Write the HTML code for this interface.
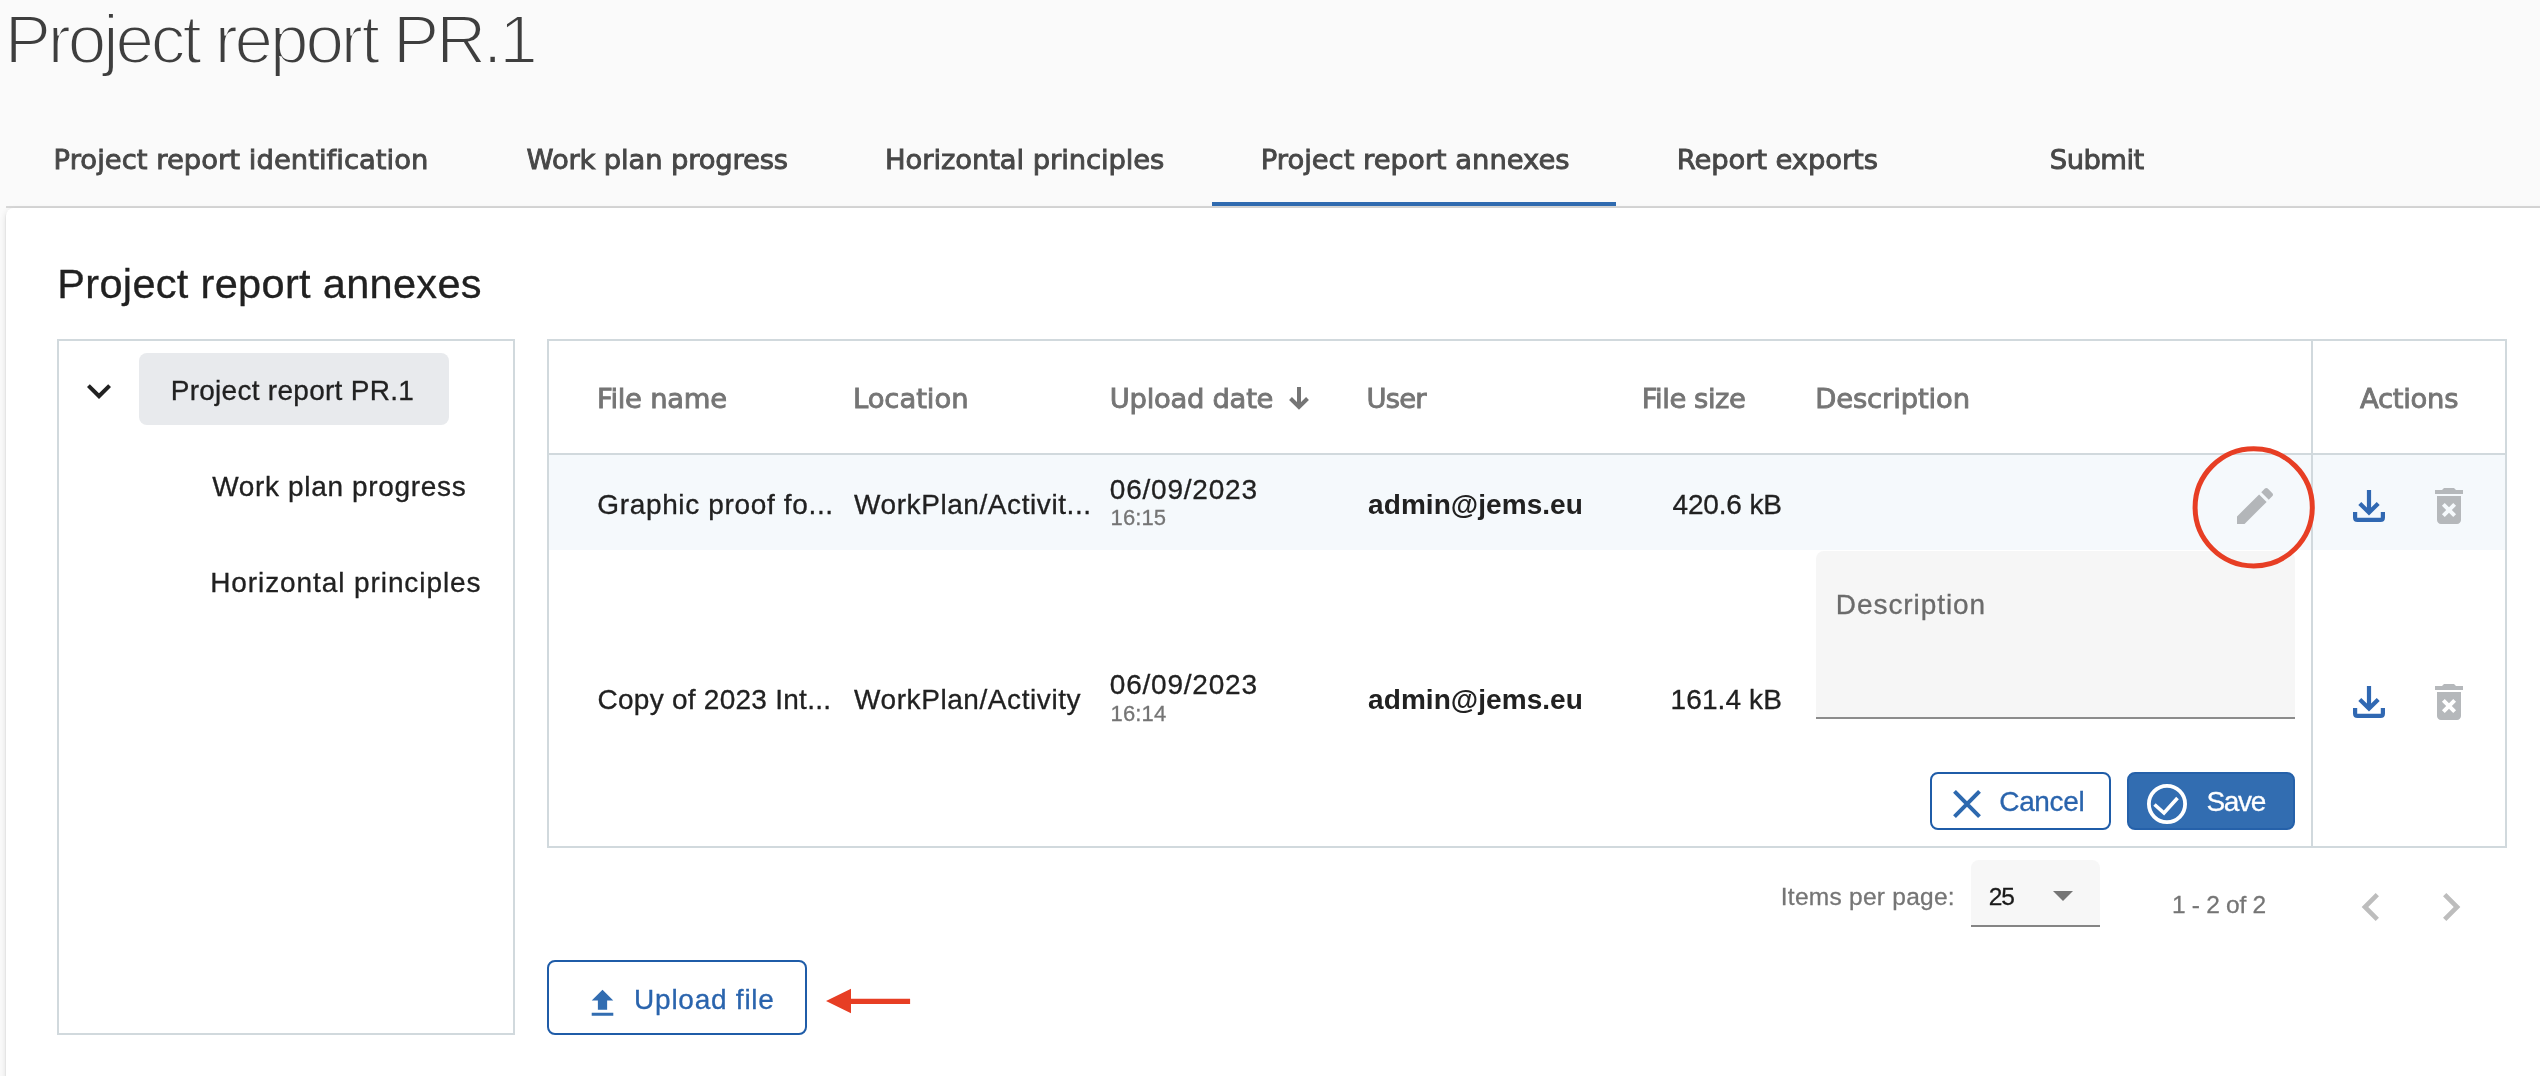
<!DOCTYPE html>
<html lang="en">
<head>
<meta charset="utf-8">
<title>Project report PR.1</title>
<style>
html,body{margin:0;padding:0}
body{width:2540px;height:1076px;overflow:hidden;background:#fafafa;position:relative;
  font-family:"Liberation Sans","DejaVu Sans",sans-serif;font-size:28px;color:#212121}
*{box-sizing:border-box}
.t{position:absolute;white-space:nowrap;line-height:1;margin:0;padding:0;font-weight:400;-webkit-text-stroke-width:0.3px}
.abs{position:absolute}
svg{position:absolute;overflow:visible}
/* title */
h1.t{font-size:69.3px;color:#3e3e3e;-webkit-text-stroke:2.1px #fafafa}
/* tabs */
.tabs{position:absolute;left:6px;top:110px;width:2534px;height:98px;border-bottom:2px solid #d8d8d8}
.tab{position:absolute;top:0;height:96px}
.tab .t{top:35.3px;color:#474747;-webkit-text-stroke:0.9px #474747;font-family:"DejaVu Sans","Liberation Sans",sans-serif;font-size:27.4px}
.ink{position:absolute;left:1206px;top:92px;width:404px;height:4px;background:#306bb0}
/* card */
.card{position:absolute;left:6px;top:208px;width:2560px;height:900px;background:#fff;border-radius:8px;
  box-shadow:0 4px 2px -2px rgba(0,0,0,.2),0 2px 2px 0 rgba(0,0,0,.14),0 2px 6px 0 rgba(0,0,0,.12)}
h3.t{font-size:41.5px;color:#212121}
/* tree */
.tree{position:absolute;left:57px;top:339px;width:458px;height:696px;border:2px solid #d1d9dd;background:#fff}
.sel{position:absolute;left:139px;top:353px;width:310px;height:72px;border-radius:8px;background:#e8eaed}
/* table */
.table{position:absolute;left:547px;top:339px;width:1960px;height:509px;border:2px solid #d1d9dd;background:#fff}
.hline{position:absolute;left:549px;top:453px;width:1956px;height:2px;background:#d1d9dd}
.vline{position:absolute;left:2311px;top:341px;width:2px;height:505px;background:#d1d9dd}
.row1{position:absolute;left:549px;top:455px;width:1956px;height:95px;background:#f5f9fc}
.th{color:#757575;-webkit-text-stroke:0.9px #757575;font-family:"DejaVu Sans","Liberation Sans",sans-serif;font-size:27.4px}
.b{font-weight:700;font-size:28px;color:#212121;-webkit-text-stroke-width:0}
.sm{font-size:22px;color:#757575}
.ta{position:absolute;left:1816px;top:551px;width:479px;height:168px;background:#f6f6f6;border-radius:8px 8px 0 0;border-bottom:2px solid #8c8c8c}
.btn{position:absolute;border:2px solid #1f5ca8;border-radius:8px;background:#fff;color:#2a64ad}
.btn.pri{background:#326db1;border-color:#2561aa;color:#fff}
.selbox{position:absolute;left:1971px;top:860px;width:128.5px;height:66.5px;background:#f7f7f7;border-radius:8px 8px 0 0;border-bottom:2px solid #858585}
.pg{font-size:24.5px;color:#757575}
</style>
</head>
<body>
<div id="page" style="position:absolute;left:0;top:0;width:2540px;height:1076px;will-change:transform">

<h1 class="t" id="title" style="left:4.7px;top:4.6px;letter-spacing:-3.12px">Project report PR.1</h1>

<div class="tabs">
  <div class="tab" style="left:0;width:470px"><span class="t" id="tab1" style="left:47.6px;top:36.2px;letter-spacing:0.03px">Project report identification</span></div>
  <div class="tab" style="left:470px;width:360px"><span class="t" id="tab2" style="left:50.6px;top:36.3px;letter-spacing:-0.16px">Work plan progress</span></div>
  <div class="tab" style="left:830px;width:376px"><span class="t" id="tab3" style="left:49.0px;top:36.3px;letter-spacing:-0.08px">Horizontal principles</span></div>
  <div class="tab" style="left:1206px;width:404px"><span class="t" id="tab4" style="left:48.8px;top:36.2px;letter-spacing:-0.02px">Project report annexes</span></div>
  <div class="tab" style="left:1610px;width:320px"><span class="t" id="tab5" style="left:60.8px;top:36.2px;letter-spacing:-0.10px">Report exports</span></div>
  <div class="tab" style="left:1930px;width:320px"><span class="t" id="tab6" style="left:113.8px;top:36.2px;letter-spacing:-0.54px">Submit</span></div>
  <div class="ink"></div>
</div>

<div class="card"></div>

<h3 class="t" id="h3" style="left:57.3px;top:263.2px;letter-spacing:0.32px">Project report annexes</h3>

<!-- tree -->
<div class="tree"></div>
<div class="sel"></div>
<svg style="left:75px;top:367px" width="48" height="48" viewBox="0 0 24 24"><path fill="#212121" d="M16.59 8.59L12 13.17 7.41 8.59 6 10l6 6 6-6z"/></svg>
<span class="t" id="tr1" style="left:170.7px;top:376.7px;letter-spacing:0.28px">Project report PR.1</span>
<span class="t" id="tr2" style="left:212.2px;top:472.9px;letter-spacing:0.66px">Work plan progress</span>
<span class="t" id="tr3" style="left:210.2px;top:569.0px;letter-spacing:0.91px">Horizontal principles</span>

<!-- table -->
<div class="table"></div>
<div class="row1"></div>
<div class="hline"></div>
<div class="vline"></div>

<span class="t th" id="th1" style="left:596.9px;top:384.8px;letter-spacing:-0.26px">File name</span>
<span class="t th" id="th2" style="left:852.9px;top:384.8px;letter-spacing:-0.03px">Location</span>
<span class="t th" id="th3" style="left:1109.8px;top:384.8px;letter-spacing:-0.28px">Upload date</span>
<svg style="left:1289px;top:387px" width="20" height="23" viewBox="0 0 20 23"><path fill="none" stroke="#757575" stroke-width="4" d="M10 0V20M1.5 11.5L10 20l8.5-8.5"/></svg>
<span class="t th" id="th4" style="left:1366.5px;top:384.8px;letter-spacing:-0.82px">User</span>
<span class="t th" id="th5" style="left:1641.8px;top:384.8px;letter-spacing:-0.45px">File size</span>
<span class="t th" id="th6" style="left:1815.2px;top:384.8px;letter-spacing:-0.11px">Description</span>
<span class="t th" id="th7" style="left:2360.0px;top:384.8px;letter-spacing:-0.26px">Actions</span>

<!-- row 1 -->
<span class="t" id="r1a" style="left:597.3px;top:490.5px;letter-spacing:0.65px">Graphic proof fo...</span>
<span class="t" id="r1b" style="left:854.0px;top:490.5px;letter-spacing:0.58px">WorkPlan/Activit...</span>
<span class="t" id="r1c" style="left:1109.8px;top:475.5px;letter-spacing:0.78px">06/09/2023</span>
<span class="t sm" id="r1d" style="left:1110.6px;top:507.0px;letter-spacing:0.07px">16:15</span>
<span class="t b" id="r1e" style="left:1368.1px;top:490.5px;letter-spacing:0.06px">admin@jems.eu</span>
<span class="t" id="r1f" style="left:1672.5px;top:490.5px;letter-spacing:-0.16px">420.6 kB</span>
<svg style="left:2231px;top:482px" width="48" height="48" viewBox="0 0 24 24"><path fill="#b3b6b9" d="M3 17.25V21h3.75L17.81 9.94l-3.75-3.75L3 17.25zM20.71 7.04c.39-.39.39-1.02 0-1.41l-2.34-2.34c-.39-.39-1.02-.39-1.41 0l-1.83 1.83 3.75 3.75 1.83-1.83z"/></svg>
<svg style="left:2353px;top:490px" width="32" height="32" viewBox="0 0 32 32"><path fill="none" stroke="#3068b2" stroke-width="4.2" d="M16 0V21M6.8 13.4L16 22.6l9.2-9.2"/><path fill="none" stroke="#3068b2" stroke-width="4.2" stroke-linejoin="round" d="M2.1 22v5.5q0 2.4 2.4 2.4h23q2.4 0 2.4-2.4V22"/></svg>
<svg style="left:2425px;top:482px" width="48" height="48" viewBox="0 0 24 24"><path fill="#b5b8bb" d="M6 19c0 1.1.9 2 2 2h8c1.1 0 2-.9 2-2V7H6v12zm2.46-7.12l1.41-1.41L12 12.59l2.12-2.12 1.41 1.41L13.41 14l2.12 2.12-1.41 1.41L12 15.41l-2.12 2.12-1.41-1.41L10.59 14l-2.13-2.12zM15.5 4l-1-1h-5l-1 1H5v2h14V4z"/></svg>

<!-- row 2 -->
<span class="t" id="r2a" style="left:597.5px;top:685.8px;letter-spacing:0.26px">Copy of 2023 Int...</span>
<span class="t" id="r2b" style="left:854.0px;top:685.8px;letter-spacing:0.58px">WorkPlan/Activity</span>
<span class="t" id="r2c" style="left:1109.8px;top:670.8px;letter-spacing:0.78px">06/09/2023</span>
<span class="t sm" id="r2d" style="left:1110.6px;top:702.5px;letter-spacing:0.12px">16:14</span>
<span class="t b" id="r2e" style="left:1368.1px;top:685.8px;letter-spacing:0.06px">admin@jems.eu</span>
<span class="t" id="r2f" style="left:1670.5px;top:685.8px;letter-spacing:0.12px">161.4 kB</span>
<div class="ta"></div>
<span class="t" id="desc" style="left:1835.8px;top:590.6px;color:#6b6b6b;letter-spacing:0.93px">Description</span>
<svg style="left:2353px;top:686px" width="32" height="32" viewBox="0 0 32 32"><path fill="none" stroke="#3068b2" stroke-width="4.2" d="M16 0V21M6.8 13.4L16 22.6l9.2-9.2"/><path fill="none" stroke="#3068b2" stroke-width="4.2" stroke-linejoin="round" d="M2.1 22v5.5q0 2.4 2.4 2.4h23q2.4 0 2.4-2.4V22"/></svg>
<svg style="left:2425px;top:678px" width="48" height="48" viewBox="0 0 24 24"><path fill="#b5b8bb" d="M6 19c0 1.1.9 2 2 2h8c1.1 0 2-.9 2-2V7H6v12zm2.46-7.12l1.41-1.41L12 12.59l2.12-2.12 1.41 1.41L13.41 14l2.12 2.12-1.41 1.41L12 15.41l-2.12 2.12-1.41-1.41L10.59 14l-2.13-2.12zM15.5 4l-1-1h-5l-1 1H5v2h14V4z"/></svg>

<!-- buttons -->
<div class="btn" style="left:1930px;top:772px;width:181px;height:58px"></div>
<svg style="left:1952.5px;top:790px" width="28" height="28" viewBox="0 0 28 28"><path fill="none" stroke="#2d69af" stroke-width="4" d="M1.5 1.3l25 25.4M26.5 1.3l-25 25.4"/></svg>
<span class="t" id="cancel" style="left:1999.3px;top:787.5px;color:#2a64ad;letter-spacing:-0.37px">Cancel</span>
<div class="btn pri" style="left:2127px;top:772px;width:168px;height:58px"></div>
<svg style="left:2147px;top:784px" width="40" height="40" viewBox="0 0 40 40"><circle cx="20" cy="20" r="18.1" fill="none" stroke="#fff" stroke-width="3.8"/><path fill="none" stroke="#fff" stroke-width="3.6" d="M7.5 20.5l9.5 8.5 13.5-15"/></svg>
<span class="t" id="save" style="left:2206.5px;top:788.0px;color:#fff;-webkit-text-stroke:0.3px #fff;letter-spacing:-1.32px">Save</span>

<!-- red circle annotation -->
<svg style="left:2192px;top:446px" width="124" height="124" viewBox="0 0 124 124"><circle cx="61.7" cy="61.3" r="58.6" fill="none" stroke="#e73e24" stroke-width="5"/></svg>

<!-- paginator -->
<span class="t pg" id="ipp" style="left:1780.8px;top:884.8px;letter-spacing:0.26px">Items per page:</span>
<div class="selbox"></div>
<span class="t" id="n25" style="left:1988.8px;top:884.8px;font-size:24.5px;color:#1a1a1a;letter-spacing:-1.23px">25</span>
<svg style="left:2053px;top:891px" width="20" height="10" viewBox="0 0 20 10"><path fill="#757575" d="M0 0h20L10 10z"/></svg>
<span class="t pg" id="range" style="left:2172.0px;top:892.8px;letter-spacing:-0.29px">1 - 2 of 2</span>
<svg style="left:2343px;top:879px" width="56" height="56" viewBox="0 0 24 24"><path fill="#bdbdbd" d="M15.41 7.41L14 6l-6 6 6 6 1.41-1.41L10.83 12z"/></svg>
<svg style="left:2423px;top:879px" width="56" height="56" viewBox="0 0 24 24"><path fill="#bdbdbd" d="M10 6L8.59 7.41 13.17 12l-4.58 4.59L10 18l6-6z"/></svg>

<!-- upload -->
<div class="btn" style="left:547px;top:960px;width:260px;height:75px"></div>
<svg style="left:584px;top:985px" width="37" height="37" viewBox="0 0 24 24"><path fill="#326db1" d="M9 16h6v-6h4l-7-7-7 7h4zm-4 2h14v2H5z"/></svg>
<span class="t" id="upl" style="left:634.1px;top:986.3px;color:#2a64ad;letter-spacing:0.75px">Upload file</span>
<svg style="left:826px;top:988px" width="85" height="26" viewBox="0 0 85 26"><path fill="#e73e24" d="M0 13.1L25 0.8V10.7H84.1V16.1H25V25.3z"/></svg>

</div>
</body>
</html>
